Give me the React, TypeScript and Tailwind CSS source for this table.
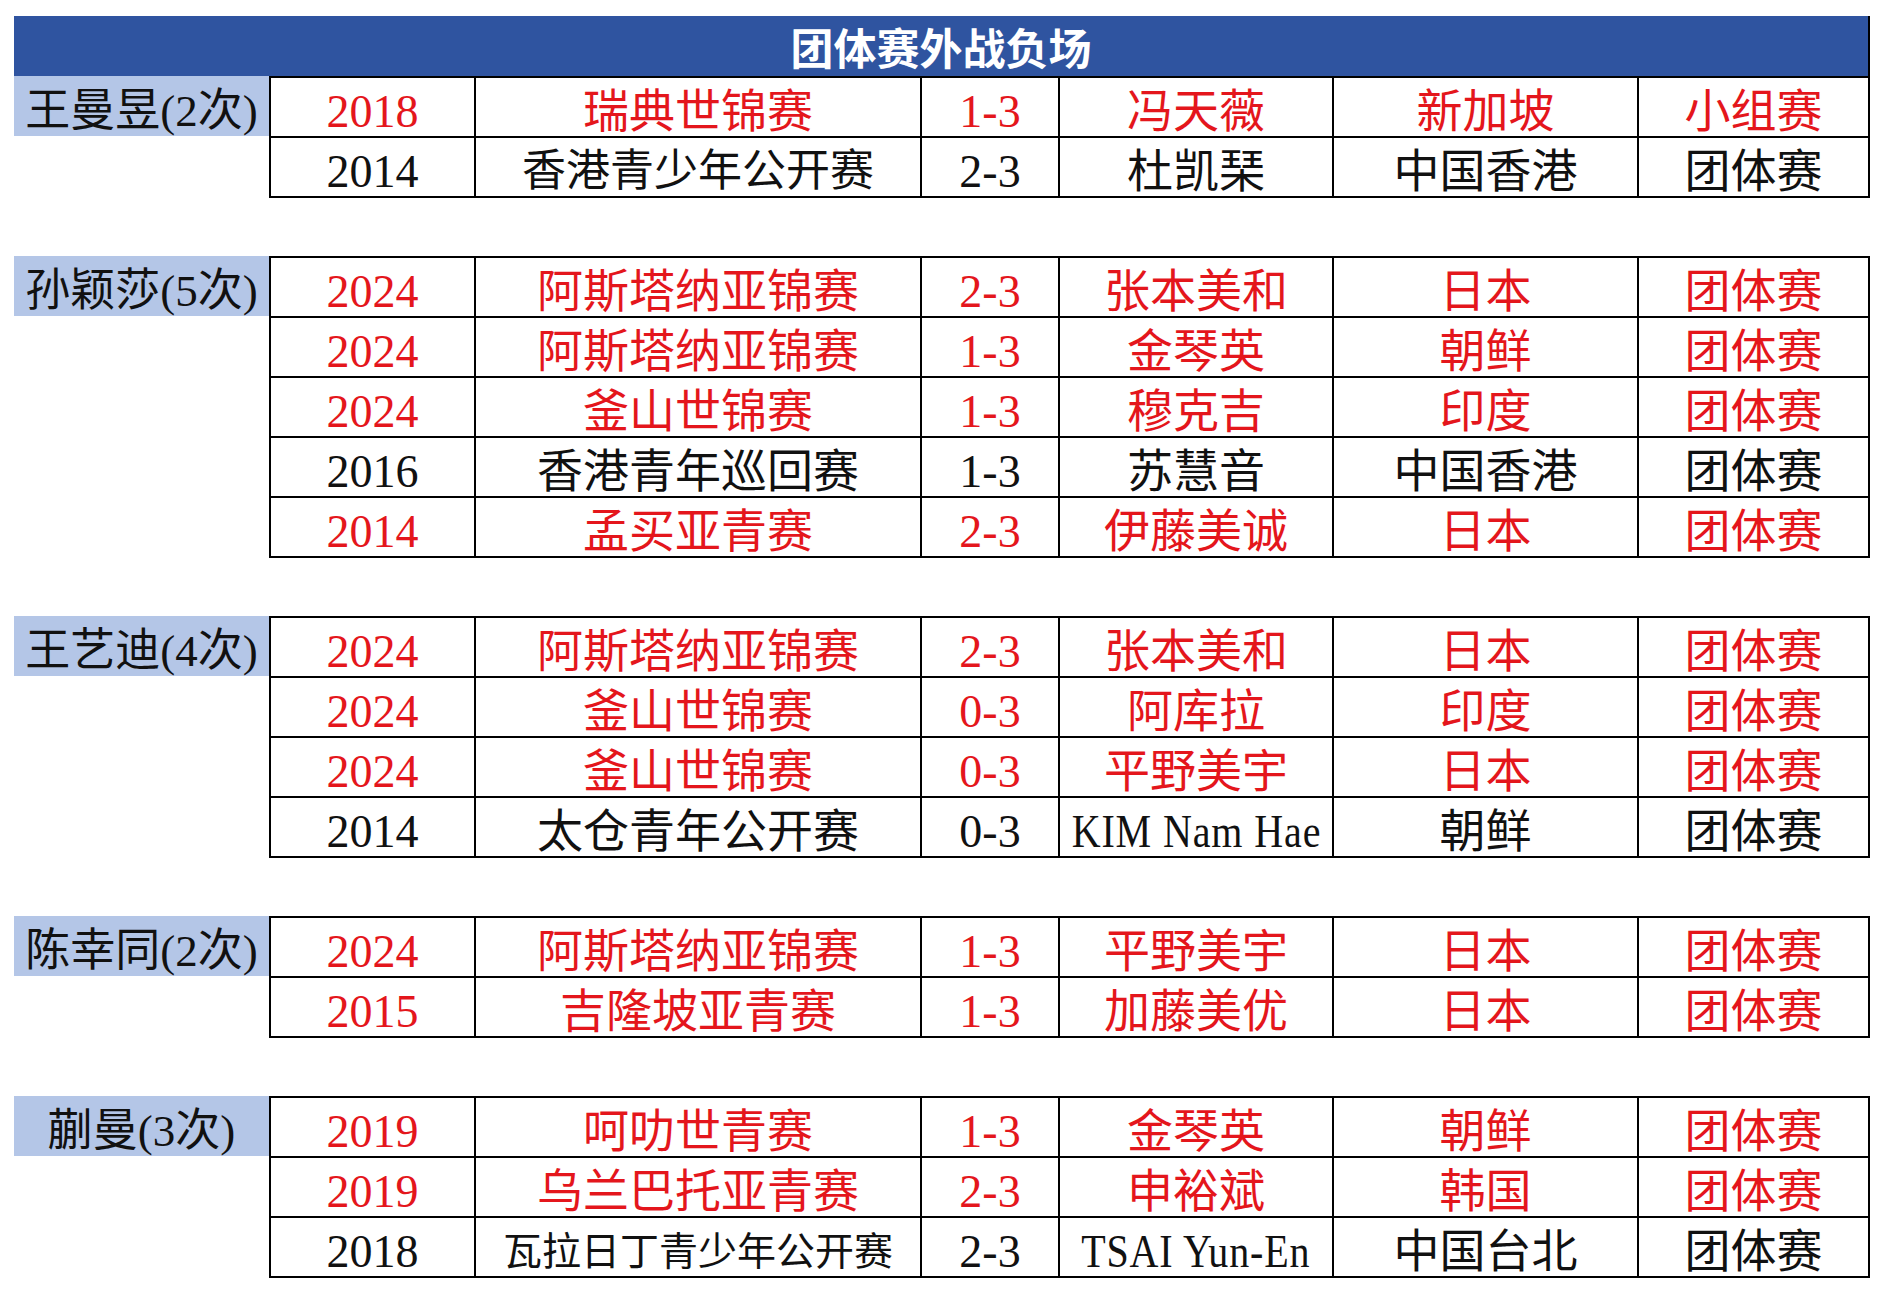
import React from "react";

type Row = {
    year: string;
    event: string;
    score: string;
    opponent: string;
    region: string;
    stage: string;
    red: boolean;
    small?: string;
};

type Group = { name: string; rows: Row[] };

const r = (year: string, event: string, score: string, opponent: string, region: string, stage: string, red = true): Row => ({
    year, event, score, opponent, region, stage, red,
});

const groups: Group[] = [
    {
        name: "王曼昱(2次)",
        rows: [
            r("2018", "瑞典世锦赛", "1-3", "冯天薇", "新加坡", "小组赛"),
            r("2014", "香港青少年公开赛", "2-3", "杜凯琹", "中国香港", "团体赛", false),
        ],
    },
    {
        name: "孙颖莎(5次)",
        rows: [
            r("2024", "阿斯塔纳亚锦赛", "2-3", "张本美和", "日本", "团体赛"),
            r("2024", "阿斯塔纳亚锦赛", "1-3", "金琴英", "朝鲜", "团体赛"),
            r("2024", "釜山世锦赛", "1-3", "穆克吉", "印度", "团体赛"),
            r("2016", "香港青年巡回赛", "1-3", "苏慧音", "中国香港", "团体赛", false),
            r("2014", "孟买亚青赛", "2-3", "伊藤美诚", "日本", "团体赛"),
        ],
    },
    {
        name: "王艺迪(4次)",
        rows: [
            r("2024", "阿斯塔纳亚锦赛", "2-3", "张本美和", "日本", "团体赛"),
            r("2024", "釜山世锦赛", "0-3", "阿库拉", "印度", "团体赛"),
            r("2024", "釜山世锦赛", "0-3", "平野美宇", "日本", "团体赛"),
            r("2014", "太仓青年公开赛", "0-3", "KIM Nam Hae", "朝鲜", "团体赛", false),
        ],
    },
    {
        name: "陈幸同(2次)",
        rows: [
            r("2024", "阿斯塔纳亚锦赛", "1-3", "平野美宇", "日本", "团体赛"),
            r("2015", "吉隆坡亚青赛", "1-3", "加藤美优", "日本", "团体赛"),
        ],
    },
    {
        name: "蒯曼(3次)",
        rows: [
            r("2019", "呵叻世青赛", "1-3", "金琴英", "朝鲜", "团体赛"),
            r("2019", "乌兰巴托亚青赛", "2-3", "申裕斌", "韩国", "团体赛"),
            r("2018", "瓦拉日丁青少年公开赛", "2-3", "TSAI Yun-En", "中国台北", "团体赛", false),
        ],
    },
];

const cell = "flex h-[60px] items-center justify-center whitespace-nowrap overflow-hidden border-r-2 border-b-2 border-black pt-[10px] leading-[46px]";

function eventSize(text: string) {
    if (text.length >= 10) return "text-[39px]";
    if (text.length === 8) return "text-[44px]";
    return "text-[46px]";
}

function Opponent({ name }: { name: string }) {
    const latin = /^[A-Za-z\s-]+$/.test(name);
    if (latin) {
        return <span className="inline-block scale-x-[0.87] tracking-[1px]">{name}</span>;
    }
    return <>{name}</>;
}

export default function App() {
    return (
        <div className="min-h-screen w-[1886px] bg-white pt-4 pl-[14px] font-['Liberation_Serif','Noto_Sans_CJK_SC',serif] text-[46px] text-[#111]">
            <div className="flex h-[60px] w-[1856px] items-center justify-center border-r-2 border-black bg-[#2f54a0] font-['Noto_Sans_CJK_SC',sans-serif] text-[43px] font-bold text-white">
                团体赛外战负场
            </div>

            {groups.map((g, gi) => (
                <div key={g.name} className={`flex ${gi > 0 ? "mt-[58px]" : ""}`}>
                    <div className="flex h-[60px] w-[255px] shrink-0 items-center justify-center bg-[#b4c6e7] pt-[10px] leading-[46px] text-[45px] whitespace-nowrap">
                        {g.name}
                    </div>
                    <div className="grid grid-cols-[205px_446px_138px_274px_305px_231px] border-l-2 border-t-2 border-black">
                        {g.rows.map((row, ri) => {
                            const color = row.red ? "text-[#e4161c]" : "text-[#111]";
                            return (
                                <React.Fragment key={ri}>
                                    <div className={`${cell} ${color}`}>{row.year}</div>
                                    <div className={`${cell} ${color} ${eventSize(row.event)}`}>{row.event}</div>
                                    <div className={`${cell} ${color}`}>{row.score}</div>
                                    <div className={`${cell} ${color}`}>
                                        <Opponent name={row.opponent} />
                                    </div>
                                    <div className={`${cell} ${color}`}>{row.region}</div>
                                    <div className={`${cell} ${color}`}>{row.stage}</div>
                                </React.Fragment>
                            );
                        })}
                    </div>
                </div>
            ))}
        </div>
    );
}
